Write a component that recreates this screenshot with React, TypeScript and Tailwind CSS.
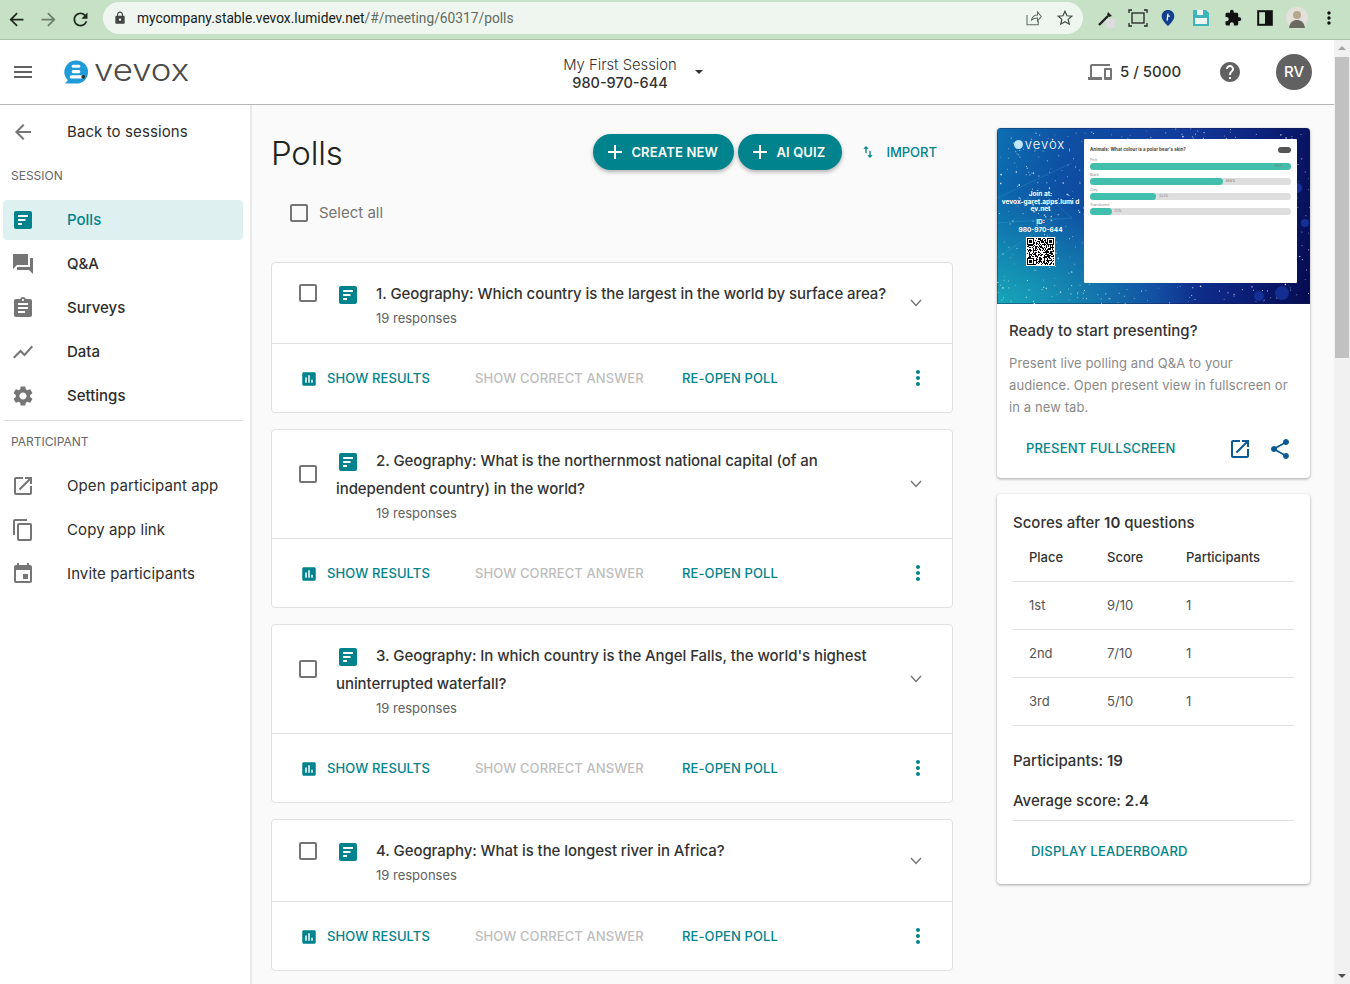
import React from "react";

const P = {
  menu: "M3 18h18v-2H3v2zm0-5h18v-2H3v2zm0-7v2h18V6H3z",
  back: "M20 11H7.83l5.59-5.59L12 4l-8 8 8 8 1.41-1.41L7.83 13H20v-2z",
  forum: "M22 6h-3v9H6v3h12l4 4V6zm-5 7V2H2v15l4-4h11z",
  assignment: "M19 3h-4.18C14.4 1.84 13.3 1 12 1c-1.3 0-2.4.84-2.82 2H5c-1.1 0-2 .9-2 2v14c0 1.1.9 2 2 2h14c1.1 0 2-.9 2-2V5c0-1.1-.9-2-2-2zm-7 0c.55 0 1 .45 1 1s-.45 1-1 1-1-.45-1-1 .45-1 1-1zm2 14H7v-2h7v2zm3-4H7v-2h10v2zm0-4H7V7h10v2z",
  chart: "M3.5 18.49l6-6.01 4 4L22 6.92l-1.41-1.41-7.09 7.97-4-4L2 16.99z",
  settings: "M19.14 12.94c.04-.3.06-.61.06-.94 0-.32-.02-.64-.07-.94l2.03-1.58c.18-.14.23-.41.12-.61l-1.92-3.32c-.12-.22-.37-.29-.59-.22l-2.39.96c-.5-.38-1.03-.7-1.62-.94l-.36-2.54c-.04-.24-.24-.41-.48-.41h-3.84c-.24 0-.43.17-.47.41l-.36 2.54c-.59.24-1.13.57-1.62.94l-2.39-.96c-.22-.08-.47 0-.59.22L2.74 8.87c-.12.21-.08.47.12.61l2.03 1.58c-.05.3-.09.63-.09.94s.02.64.07.94l-2.03 1.58c-.18.14-.23.41-.12.61l1.92 3.32c.12.22.37.29.59.22l2.39-.96c.5.38 1.03.7 1.62.94l.36 2.54c.05.24.24.41.48.41h3.84c.24 0 .44-.17.47-.41l.36-2.54c.59-.24 1.13-.56 1.62-.94l2.39.96c.22.08.47 0 .59-.22l1.92-3.32c.12-.22.07-.47-.12-.61l-2.01-1.58zM12 15.6c-1.98 0-3.6-1.62-3.6-3.6s1.62-3.6 3.6-3.6 3.6 1.62 3.6 3.6-1.62 3.6-3.6 3.6z",
  open: "M19 19H5V5h7V3H5c-1.11 0-2 .9-2 2v14c0 1.1.89 2 2 2h14c1.1 0 2-.9 2-2v-7h-2v7zM14 3v2h3.59l-9.83 9.83 1.41 1.41L19 6.41V10h2V3h-7z",
  copy: "M16 1H4c-1.1 0-2 .9-2 2v14h2V3h12V1zm3 4H8c-1.1 0-2 .9-2 2v14c0 1.1.9 2 2 2h11c1.1 0 2-.9 2-2V7c0-1.1-.9-2-2-2zm0 16H8V7h11v14z",
  event: "M16 1v2H8V1H6v2H5c-1.11 0-1.99.9-1.99 2L3 19c0 1.1.89 2 2 2h14c1.1 0 2-.9 2-2V5c0-1.1-.9-2-2-2h-1V1h-2zm1 11v5h-5v-5h5zm2 7H5V8h14v11z",
  share: "M18 16.08c-.76 0-1.44.3-1.96.77L8.91 12.7c.05-.23.09-.46.09-.7s-.04-.47-.09-.7l7.05-4.11c.54.5 1.25.81 2.04.81 1.66 0 3-1.34 3-3s-1.34-3-3-3-3 1.34-3 3c0 .24.04.47.09.7L8.04 9.81C7.5 9.31 6.79 9 6 9c-1.66 0-3 1.34-3 3s1.34 3 3 3c.79 0 1.5-.31 2.04-.81l7.12 4.16c-.05.21-.08.43-.08.65 0 1.61 1.31 2.92 2.92 2.92 1.61 0 2.92-1.31 2.92-2.92s-1.31-2.92-2.92-2.92z",
  help: "M12 2C6.48 2 2 6.48 2 12s4.48 10 10 10 10-4.48 10-10S17.52 2 12 2zm1 17h-2v-2h2v2zm2.07-7.75l-.9.92C13.45 12.9 13 13.5 13 15h-2v-.5c0-1.1.45-2.1 1.17-2.83l1.24-1.26c.37-.36.59-.86.59-1.41 0-1.1-.9-2-2-2s-2 .9-2 2H8c0-2.21 1.79-4 4-4s4 1.79 4 4c0 .88-.36 1.68-.93 2.25z",
  devices: "M4 6h18V4H4c-1.1 0-2 .9-2 2v11H0v3h14v-3H4V6zm19 2h-6c-.55 0-1 .45-1 1v10c0 .55.45 1 1 1h6c.55 0 1-.45 1-1V9c0-.55-.45-1-1-1zm-1 9h-4v-7h4v7z",
  poll: "M19 3H5c-1.1 0-2 .9-2 2v14c0 1.1.9 2 2 2h14c1.1 0 2-.9 2-2V5c0-1.1-.9-2-2-2zM9 17H7v-7h2v7zm4 0h-2V7h2v10zm4 0h-2v-4h2v4z",
  more: "M12 8c1.1 0 2-.9 2-2s-.9-2-2-2-2 .9-2 2 .9 2 2 2zm0 2c-1.1 0-2 .9-2 2s.9 2 2 2 2-.9 2-2-.9-2-2-2zm0 6c-1.1 0-2 .9-2 2s.9 2 2 2 2-.9 2-2-.9-2-2-2z",
  importX: "M9 3L5 6.99h3V14h2V6.99h3L9 3zm7 14.01V10h-2v7.01h-3L15 21l4-3.99h-3z",
  ext: "M20.5 11H19V7c0-1.1-.9-2-2-2h-4V3.5C13 2.12 11.88 1 10.5 1S8 2.12 8 3.5V5H4c-1.1 0-1.99.9-1.99 2v3.8H3.5c1.49 0 2.7 1.21 2.7 2.7s-1.21 2.7-2.7 2.7H2V20c0 1.1.9 2 2 2h3.8v-1.5c0-1.49 1.21-2.7 2.7-2.7 1.49 0 2.7 1.21 2.7 2.7V22H17c1.1 0 2-.9 2-2v-4h1.5c1.38 0 2.5-1.12 2.5-2.5S21.88 11 20.5 11z",
  refresh: "M17.65 6.35C16.2 4.9 14.21 4 12 4c-4.42 0-7.99 3.58-7.99 8s3.57 8 7.99 8c3.73 0 6.84-2.55 7.73-6h-2.08c-.82 2.33-3.04 4-5.65 4-3.31 0-6-2.69-6-6s2.69-6 6-6c1.66 0 3.14.69 4.22 1.78L13 11h7V4l-2.35 2.35z",
  lock: "M18 8h-1V6c0-2.76-2.24-5-5-5S7 3.24 7 6v2H6c-1.1 0-2 .9-2 2v10c0 1.1.9 2 2 2h12c1.1 0 2-.9 2-2V10c0-1.1-.9-2-2-2zm-6 9c-1.1 0-2-.9-2-2s.9-2 2-2 2 .9 2 2-.9 2-2 2zm3.1-9H8.9V6c0-1.71 1.39-3.1 3.1-3.1 1.71 0 3.1 1.39 3.1 3.1v2z",
  plus: "M19 13h-6v6h-2v-6H5v-2h6V5h2v6h6v2z",
};

function I({ d, className }: { d: string; className: string }) {
  return (
    <svg viewBox="0 0 24 24" fill="currentColor" className={className}>
      <path d={d} />
    </svg>
  );
}

function PollDoc({ className }: { className: string }) {
  return (
    <svg viewBox="0 0 18 18" className={className}>
      <rect width="18" height="18" rx="2" fill="#00838c" />
      <rect x="4" y="4" width="10" height="2" fill="#fff" />
      <rect x="4" y="8" width="7.5" height="2" fill="#fff" />
      <rect x="4" y="12" width="4" height="2" fill="#fff" />
    </svg>
  );
}

function Check({ className = "" }: { className?: string }) {
  return <span className={`block w-[18px] h-[18px] rounded-[2px] border-2 border-[#757575] shrink-0 ${className}`} />;
}

function Logo() {
  return (
    <svg viewBox="0 0 26 26" className="w-[25px] h-[26px] shrink-0">
      <path d="M13 1a12 12 0 0 1 0 24H1l3-3.5A12 12 0 0 1 13 1z" fill="#1f9bd7" />
      <rect x="8" y="5.5" width="9" height="3.2" rx="1.6" fill="#fff" />
      <rect x="8" y="11" width="9" height="3.2" rx="1.6" fill="#fff" />
      <rect x="6" y="16.5" width="14" height="3.2" rx="1.6" fill="#fff" />
      <circle cx="20" cy="18" r="2" fill="#333" />
    </svg>
  );
}

function rng(seed: number) {
  let s = seed;
  return () => {
    s = (s * 16807) % 2147483647;
    return s / 2147483647;
  };
}

function Stars() {
  const r = rng(4711);
  const dots = Array.from({ length: 620 }, () => ({ x: r() * 313, y: r() * 176, o: 0.25 + r() * 0.75, s: r() > 0.8 ? 1.4 : 0.9 }));
  return (
    <svg viewBox="0 0 313 176" className="absolute inset-0 w-full h-full">
      <circle cx="300" cy="60" r="5" fill="#1b3fb0" opacity=".7" />
      <circle cx="308" cy="95" r="4" fill="#1b3fb0" opacity=".7" />
      <circle cx="285" cy="165" r="7" fill="#1b3fb0" opacity=".6" />
      <circle cx="262" cy="168" r="5" fill="#1b3fb0" opacity=".6" />
      <path d="M0 95L75 90M0 130L60 90M75 35L0 70M75 90L40 60" stroke="#4fc3e0" strokeWidth=".4" opacity=".5" />
      {dots.map((d, i) => (
        <rect key={i} x={d.x} y={d.y} width={d.s} height={d.s} fill="#fff" opacity={d.o} />
      ))}
    </svg>
  );
}

function QR() {
  const r = rng(99);
  const n = 27;
  const cells: React.ReactNode[] = [];
  const finder = (x: number, y: number) => (x < 7 && y < 7) || (x >= n - 7 && y < 7) || (x < 7 && y >= n - 7);
  for (let y = 0; y < n; y++) {
    for (let x = 0; x < n; x++) {
      if (!finder(x, y) && r() > 0.5) cells.push(<rect key={`${x}-${y}`} x={x} y={y} width="1" height="1" fill="#000" />);
    }
  }
  const f = (x: number, y: number) => (
    <g key={`${x}f${y}`}>
      <rect x={x} y={y} width="7" height="7" fill="#000" />
      <rect x={x + 1} y={y + 1} width="5" height="5" fill="#fff" />
      <rect x={x + 2} y={y + 2} width="3" height="3" fill="#000" />
    </g>
  );
  return (
    <svg viewBox="-1 -1 29 29" className="w-[29px] h-[29px] bg-white" shapeRendering="crispEdges">
      {cells}
      {f(0, 0)}
      {f(n - 7, 0)}
      {f(0, n - 7)}
    </svg>
  );
}

function MiniBar({ label, w, pct }: { label: string; w: string; pct: string }) {
  return (
    <div className="mt-[3px]">
      <div className="text-[3.5px] leading-[5px] text-[#888]">{label}</div>
      <div className="h-[7px] rounded-full bg-[#dedede] relative">
        <div className={`h-full rounded-full bg-[#41bfac] ${w}`} />
        <span className="absolute top-[1px] text-[3px] leading-[5px] text-[#777]" style={{ left: pct === "100%" ? "92%" : `calc(${pct} + 2px)` }}>{pct}</span>
      </div>
    </div>
  );
}

function Thumb() {
  return (
    <div className="relative h-[176px] flex bg-[radial-gradient(ellipse_at_0%_100%,#17a5b8_0%,transparent_45%),linear-gradient(100deg,#0d6fb0_0%,#0e4fa3_22%,#123a9c_55%,#0b1f78_80%,#060b50_100%)] overflow-hidden shadow-[inset_0_0_0_1px_rgba(20,30,80,.4)]">
      <Stars />
      <div className="relative w-[87px] shrink-0 flex flex-col items-center text-white text-[6.5px] leading-[7px] font-bold text-center">
        <div className="mt-[10px] ml-[-2px] flex items-center gap-[2px] h-[12px]">
          <span className="w-[9px] h-[9px] rounded-full bg-[#bfe6f5]" />
          <span className="text-[13px] font-light tracking-[1px] leading-[12px]">vevox</span>
        </div>
        <div className="mt-[41px] w-[80px]">Join at:</div>
        <div className="w-[80px] break-all mt-[1px]">vevox-garet.apps.lumi dev.net</div>
        <div className="mt-[6px]">ID:</div>
        <div className="mt-[1px]">980-970-644</div>
        <div className="mt-[3px]"><QR /></div>
      </div>
      <div className="relative mt-[11px] mb-[21px] w-[213px] bg-white rounded-[1px] px-[6px] pt-[8px]">
        <div className="flex justify-between items-center h-[6px]">
          <span className="text-[4.5px] font-bold text-[#444]">Animals: What colour is a polar bear's skin?</span>
          <span className="w-[13px] h-[6px] rounded-full bg-[#555]" />
        </div>
        <div className="mt-[5px]">
          <MiniBar label="Pink" w="w-full" pct="100%" />
          <MiniBar label="Black" w="w-[66%]" pct="66.6%" />
          <MiniBar label="Grey" w="w-[33%]" pct="33.3%" />
          <MiniBar label="Translucent" w="w-[11%]" pct="11.1%" />
        </div>
      </div>
    </div>
  );
}

const nav1 = [
  { t: "Q&A", d: P.forum },
  { t: "Surveys", d: P.assignment },
  { t: "Data", d: P.chart },
  { t: "Settings", d: P.settings },
];
const nav2 = [
  { t: "Open participant app", d: P.open },
  { t: "Copy app link", d: P.copy },
  { t: "Invite participants", d: P.event },
];

function NavRow({ t, d, light }: { t: string; d: string; light?: boolean }) {
  return (
    <div className={`h-11 flex items-center pl-[8px] text-[15px] text-[#2d2d2d] ${light ? "tracking-[0.1px]" : "font-[450]"}`}>
      <I d={d} className="w-6 h-6 text-[#757575] shrink-0" />
      <span className="ml-[32px]">{t}</span>
    </div>
  );
}

function Sidebar() {
  return (
    <aside className="w-[252px] shrink-0 bg-white border-r-2 border-[#e9e9e9] pt-[5px] pl-[3px] pr-[7px]">
      <NavRow t="Back to sessions" d={P.back} light />
      <div className="h-11 flex items-center pl-2 text-[12px] text-[#666]">SESSION</div>
      <div className="h-10 my-[2px] bg-[#dff0f0] rounded-[4px] flex items-center pl-[11px] text-[15px] font-[450] text-[#00838c]">
        <PollDoc className="w-[18px] h-[18px] shrink-0" />
        <span className="ml-[35px]">Polls</span>
      </div>
      {nav1.map((n) => (
        <NavRow key={n.t} {...n} />
      ))}
      <div className="mt-[2px] border-t border-[#e0e0e0] h-[44px] pb-[2px] flex items-center pl-2 text-[12px] text-[#666]">PARTICIPANT</div>
      {nav2.map((n) => (
        <NavRow key={n.t} {...n} light />
      ))}
    </aside>
  );
}

function PollCard({ q, h }: { q: string; h: string }) {
  return (
    <section className="bg-white border border-[#e0e0e0] rounded-[4px]">
      <div className={`flex items-center border-b border-[#e0e0e0] ${h}`}>
        <Check className="ml-[27px] mb-5" />
        <div className="ml-[19px] w-[565px] shrink-0 pt-[1px]">
          <p className="text-[15px] leading-[28px] font-[450] tracking-[-0.07px] text-[#333] indent-[40px]">
            <span className="inline-block align-[-5px] w-0">
              <PollDoc className="w-[18px] h-[18px] -ml-[37px] max-w-none" />
            </span>
            {q}
          </p>
          <p className="ml-[40px] text-[13px] leading-[20px] text-[#616161]">19 responses</p>
        </div>
        <svg viewBox="0 0 12 8" className="w-[12px] h-[8px] ml-[9px] text-[#757575]" fill="none" stroke="currentColor" strokeWidth="1.4">
          <path d="M1 1l5 5.5L11 1" />
        </svg>
      </div>
      <div className="h-[68px] pt-[1px] flex items-center text-[13px] font-medium tracking-[0.1px]">
        <I d={P.poll} className="w-[18px] h-[18px] ml-[28px] text-[#00838c] shrink-0" />
        <span className="ml-[9px] w-[148px] text-[#00838c]">SHOW RESULTS</span>
        <span className="w-[207px] text-[#bdbdbd]">SHOW CORRECT ANSWER</span>
        <span className="text-[#00838c]">RE-OPEN POLL</span>
        <I d={P.more} className="w-6 h-6 ml-auto mr-[22px] -mt-[1px] text-[#00838c]" />
      </div>
    </section>
  );
}

function Pill({ t, w }: { t: string; w: string }) {
  return (
    <button className={`h-9 ${w} rounded-full bg-[#00838c] text-white flex items-center pl-[10px] text-[13px] font-semibold shadow-[0_2px_4px_rgba(0,0,0,.3)]`}>
      <I d={P.plus} className="w-6 h-6 shrink-0" />
      <span className="ml-[4px] pt-[1px] tracking-[0.15px]">{t}</span>
    </button>
  );
}

function Center() {
  return (
    <main className="w-[682px] shrink-0 ml-[19px]">
      <div className="mt-[29px] h-9 flex items-center">
        <h1 className="mt-[4px] text-[33px] font-light text-[#222] tracking-[-0.2px]">Polls</h1>
        <div className="ml-auto mr-[16px] flex items-center">
          <Pill t="CREATE NEW" w="w-[141px]" />
          <div className="w-1" />
          <Pill t="AI QUIZ" w="w-[104px]" />
          <I d={P.importX} className="w-4 h-4 ml-[18px] text-[#00838c]" />
          <span className="ml-[10px] pt-[1px] text-[13px] font-medium text-[#00838c]">IMPORT</span>
        </div>
      </div>
      <div className="mt-[23px] h-10 flex items-center pl-[19px]">
        <Check />
        <span className="ml-[11px] text-[15px] text-[#757575]">Select all</span>
      </div>
      <div className="mt-[29px] flex flex-col gap-4">
        <PollCard h="h-[81px]" q="1. Geography: Which country is the largest in the world by surface area?" />
        <PollCard h="h-[109px]" q="2. Geography: What is the northernmost national capital (of an independent country) in the world?" />
        <PollCard h="h-[109px]" q="3. Geography: In which country is the Angel Falls, the world's highest uninterrupted waterfall?" />
        <PollCard h="h-[82px]" q="4. Geography: What is the longest river in Africa?" />
      </div>
    </main>
  );
}

const scores = [
  ["1st", "9/10", "1"],
  ["2nd", "7/10", "1"],
  ["3rd", "5/10", "1"],
];

function Right() {
  return (
    <div className="w-[313px] shrink-0 ml-[44px] pt-[23px] flex flex-col gap-4">
      <section className="bg-white rounded-[4px] overflow-hidden shadow-[0_1px_3px_rgba(0,0,0,.35)] h-[350px]">
        <Thumb />
        <div className="pl-3 pr-[18px]">
          <div className="mt-[16px] text-[15px] leading-[22px] font-[450] text-[#333]">Ready to start presenting?</div>
          <p className="mt-[10px] pr-[3px] text-[13px] leading-[22px] tracking-[0.1px] text-[#8a8a8a]">Present live polling and Q&amp;A to your audience. Open present view in fullscreen or in a new tab.</p>
          <div className="mt-[17px] h-7 flex items-center">
            <span className="ml-[17px] text-[13px] font-medium tracking-[0.17px] text-[#00838c]">PRESENT FULLSCREEN</span>
            <I d={P.open} className="w-6 h-6 ml-auto text-[#0b5a94]" />
            <I d={P.share} className="w-6 h-6 ml-4 text-[#0b5a94]" />
          </div>
        </div>
      </section>
      <section className="bg-white rounded-[4px] shadow-[0_1px_3px_rgba(0,0,0,.35)] h-[390px] px-4 pt-[17px]">
        <div className="text-[15px] leading-[24px] font-[450] text-[#333]">Scores after <span className="font-semibold">10</span> questions</div>
        <div className="h-[47px] flex items-center text-[13px] font-[450] text-[#333] border-b border-[#e0e0e0] pb-[1px]">
          <span className="ml-4 w-[78px]">Place</span>
          <span className="w-[79px]">Score</span>
          <span>Participants</span>
        </div>
        {scores.map((r) => (
          <div key={r[0]} className="h-12 flex items-center text-[13px] text-[#555] border-b border-[#e0e0e0]">
            <span className="ml-4 w-[78px]">{r[0]}</span>
            <span className="w-[79px]">{r[1]}</span>
            <span>{r[2]}</span>
          </div>
        ))}
        <div className="mt-[23px] text-[15px] leading-[24px] font-[450] text-[#333]">Participants: <span className="font-semibold">19</span></div>
        <div className="mt-[16px] text-[15px] leading-[24px] font-[450] text-[#333]">Average score: <span className="font-semibold">2.4</span></div>
        <div className="mt-[7px] border-t border-[#e0e0e0] pt-[18px] pl-[18px] text-[13px] leading-[24px] font-medium tracking-[0.2px] text-[#00838c]">DISPLAY LEADERBOARD</div>
      </section>
    </div>
  );
}

function Header() {
  return (
    <header className="h-[65px] shrink-0 bg-white border-b border-[#b5b5b5] flex items-center">
      <I d={P.menu} className="w-6 h-6 ml-[11px] text-[#616161]" />
      <div className="ml-[29px] w-[500px] flex items-center">
        <Logo />
        <span className="inline-block origin-left scale-x-[1.16] ml-[5px] text-[30px] leading-none font-light text-[#4a4a4a] -mt-[4px]">vevox</span>
      </div>
      <div className="w-[114px] -ml-[1px] mr-[1px] pt-[3px] text-center text-[#333]">
        <div className="text-[14.8px] leading-[18px] font-light whitespace-nowrap">My First Session</div>
        <div className="text-[14.5px] leading-[18px] font-medium whitespace-nowrap">980-970-644</div>
      </div>
      <span className="ml-[17px] w-0 h-0 border-x-[4px] border-x-transparent border-t-[4px] border-t-[#333]" />
      <I d={P.devices} className="w-6 h-6 ml-[385px] text-[#757575]" />
      <span className="ml-2 pt-[1px] text-[15px] font-medium text-[#333] whitespace-nowrap">5 / 5000</span>
      <I d={P.help} className="w-6 h-6 ml-[37px] text-[#616161]" />
      <span className="ml-[34px] w-9 h-9 rounded-full bg-[#616161] text-white flex items-center justify-center text-[15px] font-medium">RV</span>
    </header>
  );
}

function Chrome() {
  return (
    <div className="h-10 shrink-0 bg-[#c6e1c6] border-b border-[#a9c4a9] flex items-center text-[#1f2a1f]">
      <I d={P.back} className="w-[21px] h-[21px] ml-[6px]" />
      <I d={P.back} className="w-[21px] h-[21px] ml-[11px] rotate-180 text-[#6e7d6e]" />
      <I d={P.refresh} className="w-[21px] h-[21px] ml-[11px]" />
      <div className="ml-[12px] w-[980px] h-8 -mt-[3px] rounded-full bg-[#eff6f0] flex items-center text-[13.75px] font-['Roboto',sans-serif]">
        <I d={P.lock} className="w-[14px] h-[14px] ml-[10px] text-[#444]" />
        <span className="ml-[10px] text-[#15201a]">mycompany.stable.vevox.lumidev.net</span>
        <span className="text-[#5f6b62]">/#/meeting/60317/polls</span>
        <svg viewBox="0 0 24 24" className="w-[18px] h-[18px] ml-auto text-[#5f6b62]" fill="none" stroke="currentColor" strokeWidth="1.4">
          <path d="M4 8v13h15v-5M10 15c1-5 5-7 8-7V4l5 6-5 6v-4c-3 0-6 1-8 3z" />
        </svg>
        <svg viewBox="0 0 24 24" className="w-[18px] h-[18px] ml-[14px] mr-[9px] text-[#3c4a3f]" fill="none" stroke="currentColor" strokeWidth="1.6">
          <path d="M12 3l2.7 6 6.3.6-4.8 4.2 1.5 6.4L12 17l-5.7 3.2 1.5-6.4L3 9.6 9.3 9z" />
        </svg>
      </div>
      <svg viewBox="0 0 20 20" className="w-5 h-5 ml-[13px] -mt-[3px]">
        <path d="M3 17L12 8" stroke="#222" strokeWidth="2.4" />
        <path d="M12 4l4 4-3 1-2-2z" fill="#222" />
        <rect x="10" y="11" width="9" height="9" rx="1" fill="#dcdcdc" />
      </svg>
      <svg viewBox="0 0 20 20" className="w-5 h-5 ml-[12px] -mt-[3px] text-[#222]" fill="none" stroke="currentColor" strokeWidth="1.3">
        <path d="M1 5V2h3M16 2h3v3M19 15v3h-3M4 18H1v-3" />
        <rect x="4" y="5" width="12" height="10" />
      </svg>
      <svg viewBox="0 0 20 20" className="w-[18px] h-[18px] ml-[11px] -mt-[3px]">
        <path d="M10 1c4 0 7 3 7 7 0 4-4 8-7 11-3-3-7-7-7-11 0-4 3-7 7-7z" fill="#123f8f" />
        <path d="M10 5l-1 8M10 8h2" stroke="#fff" strokeWidth="1.4" />
      </svg>
      <svg viewBox="0 0 20 20" className="w-5 h-5 ml-[14px] -mt-[3px]">
        <path d="M2 2h13l3 3v13H2z" fill="#3bb4bb" />
        <rect x="4" y="10" width="12" height="6" fill="#eff6f0" />
        <rect x="6" y="2" width="6" height="5" fill="#eff6f0" />
      </svg>
      <I d={P.ext} className="w-[18px] h-[18px] ml-[13px] -mt-[3px] text-[#111]" />
      <svg viewBox="0 0 16 16" className="w-4 h-4 ml-[15px] -mt-[3px]">
        <rect x="1.2" y="1.2" width="13.6" height="13.6" fill="none" stroke="#111" strokeWidth="2" />
        <rect x="8" y="1" width="7" height="14" fill="#111" />
      </svg>
      <svg viewBox="0 0 22 22" className="w-[22px] h-[22px] ml-[13px] -mt-[3px]">
        <circle cx="11" cy="11" r="11" fill="#e4e0da" />
        <circle cx="11" cy="8" r="4" fill="#b5a68e" />
        <path d="M3 21c1-6 4-8 8-8s7 2 8 8z" fill="#6a6a60" />
      </svg>
      <I d={P.more} className="w-5 h-5 ml-[11px] -mt-[3px] text-[#111]" />
    </div>
  );
}

function Scrollbar() {
  return (
    <div className="w-4 shrink-0 bg-[#f1f1f1] flex flex-col items-center">
      <span className="mt-[6px] w-0 h-0 border-x-[4px] border-x-transparent border-b-[4px] border-b-[#a3a3a3]" />
      <span className="mt-[7px] w-[14px] h-[301px] bg-[#c1c1c1]" />
      <span className="mt-auto mb-[6px] w-0 h-0 border-x-[4px] border-x-transparent border-t-[4px] border-t-[#505050]" />
    </div>
  );
}

export default function App() {
  return (
    <div className="w-[1350px] h-[984px] overflow-hidden flex flex-col font-['Inter',sans-serif] bg-[#fafafa]">
      <Chrome />
      <div className="flex-1 flex min-h-0">
        <div className="flex-1 flex flex-col min-w-0">
          <Header />
          <div className="flex-1 flex min-h-0 overflow-hidden">
            <Sidebar />
            <Center />
            <Right />
          </div>
        </div>
        <Scrollbar />
      </div>
    </div>
  );
}
